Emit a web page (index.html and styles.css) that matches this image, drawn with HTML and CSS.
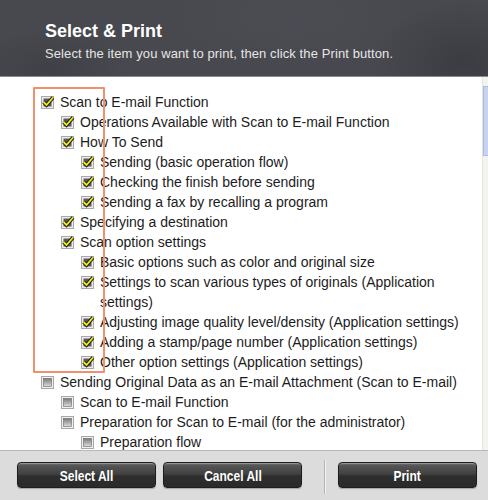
FILE: index.html
```html
<!DOCTYPE html>
<html>
<head>
<meta charset="utf-8">
<link rel="stylesheet" href="styles.css">
</head>
<body>
<svg class="defs" width="0" height="0">
  <defs>
    <linearGradient id="ug" x1="0" y1="0" x2="0" y2="1">
      <stop offset="0" stop-color="#7a7a7a"/>
      <stop offset="1" stop-color="#dcdcdc"/>
    </linearGradient>
    <symbol id="on" viewBox="0 0 14 14">
      <rect x="0.5" y="1.5" width="12" height="12" fill="#ececec" stroke="#a8a8a8"/>
      <rect x="2.5" y="3.5" width="8" height="8" fill="#5a5a5a"/>
      <path d="M2.5 7 L5.5 10 L12 2.5" stroke="#1c1c1c" stroke-width="3.6" fill="none" stroke-linejoin="miter"/>
      <path d="M2.5 7 L5.5 10 L12 2.5" stroke="#f2ee10" stroke-width="1.8" fill="none" stroke-linejoin="miter"/>
    </symbol>
    <symbol id="off" viewBox="0 0 14 14">
      <rect x="0.5" y="1.5" width="12" height="12" fill="#f0f0f0" stroke="#a8a8a8"/>
      <rect x="2.5" y="3.5" width="8" height="8" fill="url(#ug)" stroke="#666" stroke-width="0.6"/>
    </symbol>
  </defs>
</svg>
<div class="page">
  <header class="head">
    <h1 class="title">Select &amp; Print</h1>
    <p class="sub">Select the item you want to print, then click the Print button.</p>
  </header>
  <main class="body">
    <div class="tree">
      <div class="row l0"><svg class="cb"><use href="#on"/></svg><span>Scan to E-mail Function</span></div>
      <div class="row l1"><svg class="cb"><use href="#on"/></svg><span>Operations Available with Scan to E-mail Function</span></div>
      <div class="row l1"><svg class="cb"><use href="#on"/></svg><span>How To Send</span></div>
      <div class="row l2"><svg class="cb"><use href="#on"/></svg><span>Sending (basic operation flow)</span></div>
      <div class="row l2"><svg class="cb"><use href="#on"/></svg><span>Checking the finish before sending</span></div>
      <div class="row l2"><svg class="cb"><use href="#on"/></svg><span>Sending a fax by recalling a program</span></div>
      <div class="row l1"><svg class="cb"><use href="#on"/></svg><span>Specifying a destination</span></div>
      <div class="row l1"><svg class="cb"><use href="#on"/></svg><span>Scan option settings</span></div>
      <div class="row l2"><svg class="cb"><use href="#on"/></svg><span>Basic options such as color and original size</span></div>
      <div class="row l2"><svg class="cb"><use href="#on"/></svg><span>Settings to scan various types of originals (Application settings)</span></div>
      <div class="row l2"><svg class="cb"><use href="#on"/></svg><span>Adjusting image quality level/density (Application settings)</span></div>
      <div class="row l2"><svg class="cb"><use href="#on"/></svg><span>Adding a stamp/page number (Application settings)</span></div>
      <div class="row l2"><svg class="cb"><use href="#on"/></svg><span>Other option settings (Application settings)</span></div>
      <div class="row l0"><svg class="cb"><use href="#off"/></svg><span>Sending Original Data as an E-mail Attachment (Scan to E-mail)</span></div>
      <div class="row l1"><svg class="cb"><use href="#off"/></svg><span>Scan to E-mail Function</span></div>
      <div class="row l1"><svg class="cb"><use href="#off"/></svg><span>Preparation for Scan to E-mail (for the administrator)</span></div>
      <div class="row l2"><svg class="cb"><use href="#off"/></svg><span>Preparation flow</span></div>
    </div>
    <div class="scroll"><div class="thumb"></div></div>
    <div class="mark"></div>
  </main>
  <footer class="foot">
    <button class="btn"><span class="lbl">Select All</span></button>
    <button class="btn"><span class="lbl">Cancel All</span></button>
    <div class="sep"></div>
    <button class="btn"><span class="lbl">Print</span></button>
  </footer>
</div>
</body>
</html>
```
FILE: styles.css
```css
html, body { margin: 0; padding: 0; }
body { width: 488px; height: 500px; overflow: hidden; font-family: "Liberation Sans", Arial, sans-serif; background: #fff; }
.defs { position: absolute; width: 0; height: 0; }
.page { display: flex; flex-direction: column; height: 500px; }
.head {
  height: 77px; flex: none; box-sizing: border-box; padding: 20px 0 0 45px;
  background:
    radial-gradient(ellipse 90px 60px at 95% 80%, rgba(30,30,36,0.3), transparent),
    radial-gradient(ellipse 120px 50px at 60% 20%, rgba(90,90,100,0.2), transparent),
    radial-gradient(ellipse 80px 40px at 10% 90%, rgba(30,30,36,0.2), transparent),
    #48484f;
  border-bottom: 1px solid #8a8a92;
}
.title { margin: 0; color: #fff; font-size: 18px; font-weight: bold; line-height: 22px; }
.sub { margin: 4px 0 0; color: #e6e6e6; font-size: 13px; line-height: 16px; letter-spacing: 0.1px; }
.body { position: relative; flex: 1; display: flex; overflow: hidden; background: #fff; }
.tree { flex: 1; padding: 15px 20px 0 41px; color: #1c1c1c; font-size: 14px; line-height: 20px; }
.row { display: flex; align-items: flex-start; }
.row span { flex: 1; }
.cb { width: 14px; height: 14px; margin: 3px 5px 0 0; flex: none; }
.l1 { padding-left: 20px; }
.l2 { padding-left: 40px; }
.scroll { width: 5px; background: #f3f3ef; border-left: 1px solid #e4e4e0; position: relative; }
.thumb { position: absolute; left: 0; right: 0; top: 9px; height: 68px; background: #c6d4f0; border: 1px solid #a9bce6; border-right: none; }
.mark { position: absolute; left: 33px; top: 10px; width: 68px; height: 282px; border: 2px solid #f0906c; border-radius: 1px; pointer-events: none; }
.foot {
  flex: none; height: 50px; box-sizing: border-box; border-top: 1px solid #b8b8b8; background: #dcdcdc;
  display: flex; align-items: flex-start; padding: 11px 0 0 17px;
}
.btn {
  width: 139px; height: 26px; margin: 0 7px 0 0; padding: 0;
  border: 1px solid #1e1e1e; border-radius: 4px;
  background: linear-gradient(#747474 0%, #545454 12%, #424242 45%, #2e2e2e 55%, #2a2a2a 100%);
  box-shadow: inset 0 1px 0 rgba(255,255,255,0.25), 0 1px 1px rgba(0,0,0,0.25);
  color: #fff; font-family: "Liberation Sans", Arial, sans-serif; font-weight: bold; font-size: 15px;
}
.lbl { display: inline-block; transform: scaleX(0.8); }
.sep { width: 1px; height: 34px; margin: -2px 13px 0 15px; background: #b4b4b4; box-shadow: 1px 0 0 #f2f2f2; }
```
